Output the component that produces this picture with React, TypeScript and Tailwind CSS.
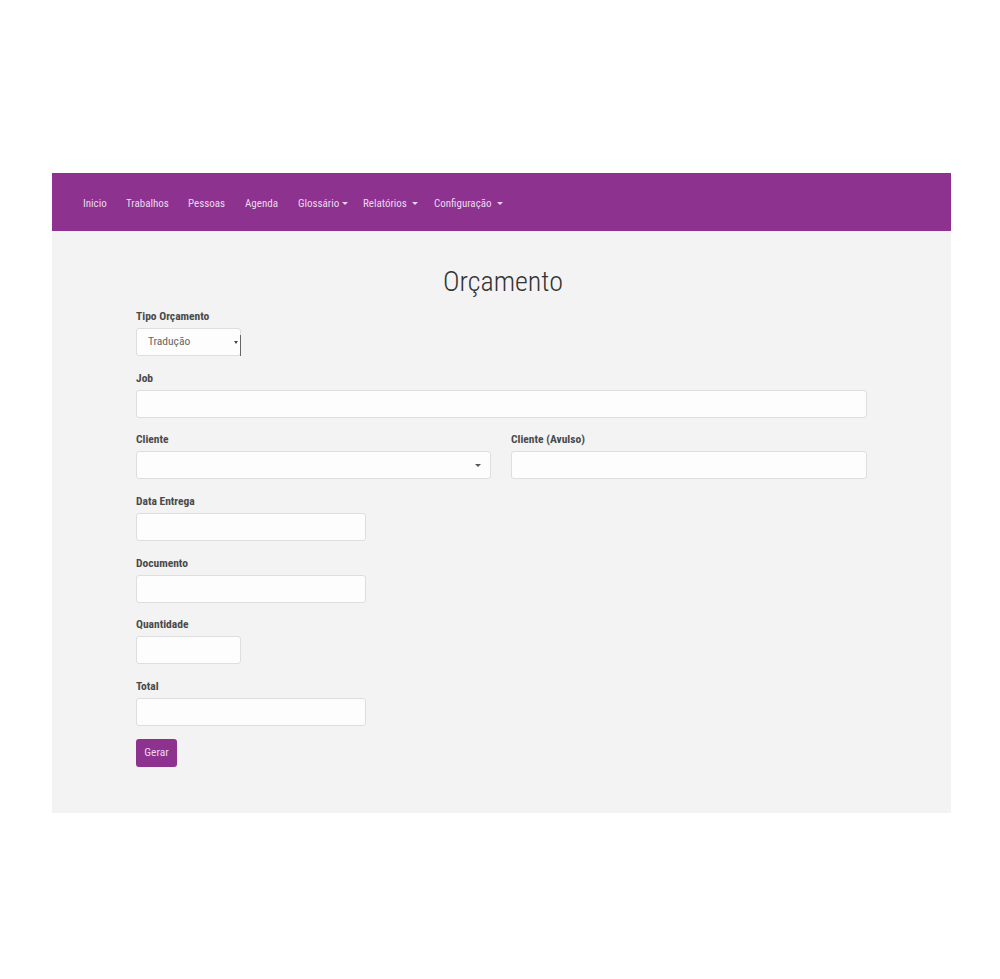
import React from "react";

const font = { fontFamily: '"Roboto Condensed", "Liberation Sans Narrow", Roboto, sans-serif' };

function Caret() {
  return <span className="ml-[3px] inline-block h-0 w-0 border-l-[3px] border-r-[3px] border-t-[3px] border-l-transparent border-r-transparent border-t-[#e9d3ec] align-middle" />;
}

function Label({ children }: { children: React.ReactNode }) {
  return <div className="text-[11.5px] leading-[14px] font-bold text-[#4a4a4a] mb-[5px]">{children}</div>;
}

function Input({ w }: { w: string }) {
  return <div className={`h-[28px] ${w} rounded-[3px] border border-[#dedede] bg-[#fdfdfd]`} />;
}

export default function App() {
  return (
    <div className="min-h-[979px] w-[1000px] bg-white" style={font}>
      <div className="h-[173px]" />
      <div className="ml-[52px] w-[899px] bg-[#f3f3f3] pb-[46px]">
        <nav className="h-[58px] border-t border-[#555] bg-[#8e3290] flex items-center pt-[3px] pl-[31px] text-[11px] text-[#ecd7ee]">
          <span className="w-[43px]">Inicio</span>
          <span className="w-[62px]">Trabalhos</span>
          <span className="w-[57px]">Pessoas</span>
          <span className="w-[53px]">Agenda</span>
          <span className="w-[65px]">Glossário<Caret /></span>
          <span className="w-[71px]">Relatórios <Caret /></span>
          <span>Configuração <Caret /></span>
        </nav>
        <div className="mx-auto w-[731px]">
          <h1 className="mt-[34px] pl-[3px] text-center text-[28px] leading-[34px] font-light text-[#333]">Orçamento</h1>
          <div className="mt-[10px]">
            <Label>Tipo Orçamento</Label>
            <div className="relative h-[28px] w-[105px] rounded-[3px] border border-[#dedede] bg-[#fdfdfd] flex items-center pl-[11px] text-[11.5px] text-[#666]">
              Tradução
              <div className="absolute right-[-1px] top-[6px] h-[21px] w-[1px] bg-[#666]" />
              <div className="absolute right-[2px] top-[12px] h-0 w-0 border-l-[2px] border-r-[2px] border-t-[3px] border-l-transparent border-r-transparent border-t-[#444]" />
            </div>
          </div>
          <div className="mt-[15px]">
            <Label>Job</Label>
            <Input w="w-[731px]" />
          </div>
          <div className="mt-[14px] flex gap-[20px]">
            <div className="w-[355px]">
              <Label>Cliente</Label>
              <div className="relative h-[28px] w-[355px] rounded-[3px] border border-[#dedede] bg-[#fdfdfd]">
                <div className="absolute right-[9px] top-[12px] h-0 w-0 border-l-[3px] border-r-[3px] border-t-[3px] border-l-transparent border-r-transparent border-t-[#555]" />
              </div>
            </div>
            <div className="w-[356px]">
              <Label>Cliente (Avulso)</Label>
              <Input w="w-[356px]" />
            </div>
          </div>
          <div className="mt-[15px]">
            <Label>Data Entrega</Label>
            <Input w="w-[230px]" />
          </div>
          <div className="mt-[15px]">
            <Label>Documento</Label>
            <Input w="w-[230px]" />
          </div>
          <div className="mt-[14px]">
            <Label>Quantidade</Label>
            <Input w="w-[105px]" />
          </div>
          <div className="mt-[15px]">
            <Label>Total</Label>
            <Input w="w-[230px]" />
          </div>
          <button className="mt-[13px] h-[28px] w-[41px] rounded-[3px] bg-[#8e3290] text-[11.5px] text-[#ecd7ee]">Gerar</button>
        </div>
      </div>
    </div>
  );
}
